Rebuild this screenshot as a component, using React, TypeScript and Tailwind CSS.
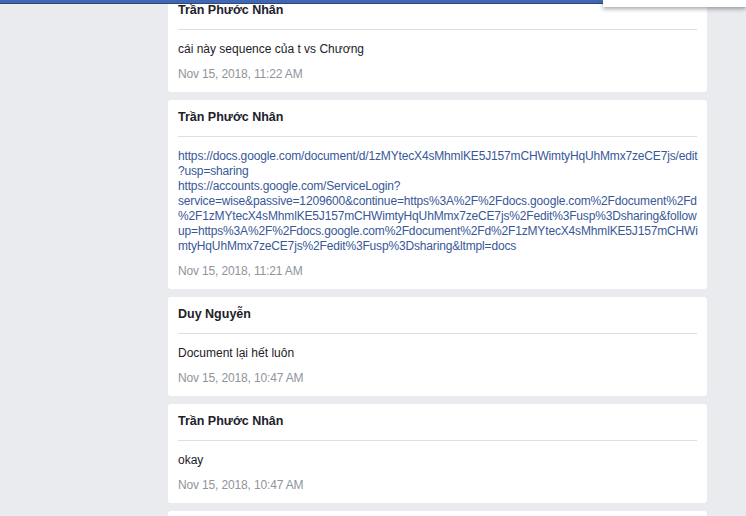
import React from "react";

type Msg = {
    id: number;
    author: string;
    lines: string[];
    isLink?: boolean;
    time: string;
};

const MESSAGES: Msg[] = [
    { id: 1, author: "Trần Phước Nhân", lines: ["cái này sequence của t vs Chương"], time: "Nov 15, 2018, 11:22 AM" },
    {
        id: 2,
        author: "Trần Phước Nhân",
        isLink: true,
        lines: [
            "https://docs.google.com/document/d/1zMYtecX4sMhmlKE5J157mCHWimtyHqUhMmx7zeCE7js/edit",
            "?usp=sharing",
            "https://accounts.google.com/ServiceLogin?",
            "service=wise&passive=1209600&continue=https%3A%2F%2Fdocs.google.com%2Fdocument%2Fd",
            "%2F1zMYtecX4sMhmlKE5J157mCHWimtyHqUhMmx7zeCE7js%2Fedit%3Fusp%3Dsharing&follow",
            "up=https%3A%2F%2Fdocs.google.com%2Fdocument%2Fd%2F1zMYtecX4sMhmlKE5J157mCHWi",
            "mtyHqUhMmx7zeCE7js%2Fedit%3Fusp%3Dsharing&ltmpl=docs",
        ],
        time: "Nov 15, 2018, 11:21 AM",
    },
    { id: 3, author: "Duy Nguyễn", lines: ["Document lại hết luôn"], time: "Nov 15, 2018, 10:47 AM" },
    { id: 4, author: "Trần Phước Nhân", lines: ["okay"], time: "Nov 15, 2018, 10:47 AM" },
];

function MessageCard({ msg }: { msg: Msg }) {
    return (
        <div className="rounded-[3px] bg-white px-[10px] pt-[7px] pb-[10px]">
            <div className="text-[12.5px] font-bold leading-[20px] text-[#1d2129]">{msg.author}</div>
            <div className="mt-[9px] h-px bg-[#dddfe2]"></div>
            <div
                className={
                    "mt-[12px] text-[12px] leading-[15px] " +
                    (msg.isLink ? "tracking-[-0.16px] text-[#385898]" : "text-[#1d2129]")
                }
            >
                {msg.lines.map((line, i) => (
                    <div key={i} className="whitespace-nowrap">{line}</div>
                ))}
            </div>
            <div className="mt-[10px] text-[12px] leading-[15px] tracking-[-0.15px] text-[#90949c]">{msg.time}</div>
        </div>
    );
}

export default function App() {
    return (
        <div className="relative h-[516px] w-[746px] overflow-hidden bg-[#e9ebee] font-['Liberation_Sans',Arial,sans-serif]">
            <div className="ml-[168px] mt-[-7px] flex w-[539px] flex-col gap-[8px]">
                {MESSAGES.map((msg) => (
                    <MessageCard key={msg.id} msg={msg} />
                ))}
                {/* next card, only its top edge is in view */}
                <div className="h-[40px] rounded-[3px] bg-white"></div>
            </div>

            {/* top bar + dropdown peeking in */}
            <div className="absolute left-0 top-0 h-[4px] w-[603px] border-b border-[#29487d] bg-[#4267b2]"></div>
            <div className="absolute right-0 top-0 h-[7px] w-[143px] bg-white shadow-[0_2px_4px_rgba(0,0,0,0.35)]"></div>
        </div>
    );
}
